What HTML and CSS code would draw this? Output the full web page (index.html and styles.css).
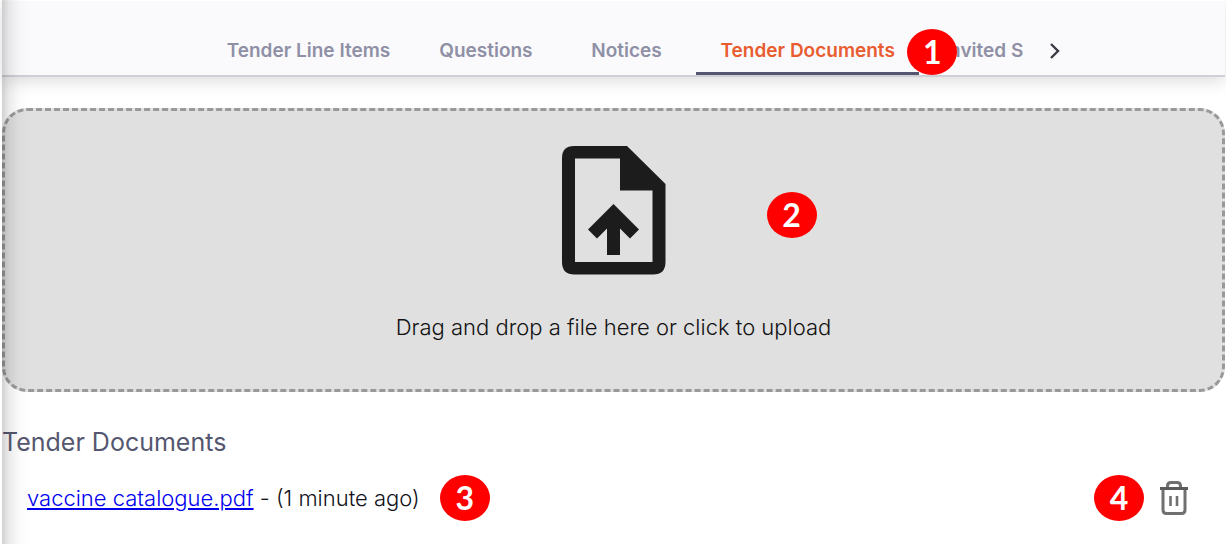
FILE: index.html
```html
<!DOCTYPE html>
<html lang="en">
<head>
<meta charset="utf-8">
<title>Tender Documents</title>
<meta name="viewport" content="width=device-width, initial-scale=1">
<link rel="stylesheet" href="styles.css">
</head>
<body>
<div class="app">
  <header class="tab-bar">
    <div class="tab-scroller">
      <div class="tab-list" role="tablist">
        <button class="tab" type="button" role="tab">Tender Line Items</button>
        <button class="tab" type="button" role="tab">Questions</button>
        <button class="tab" type="button" role="tab">Notices</button>
        <button class="tab tab-active" type="button" role="tab" aria-selected="true">Tender Documents</button>
        <button class="tab" type="button" role="tab">Invited S</button>
      </div>
      <button class="scroll-next" type="button" aria-label="Next tabs">
        <svg width="12" height="18" viewBox="0 0 12 18" fill="none" stroke="#3a3a44" stroke-width="2.4"><path d="M2 2l7 7-7 7"/></svg>
      </button>
      <span class="badge badge-tab">1</span>
    </div>
  </header>
  <main class="content">
    <button class="dropzone" type="button">
      <svg class="upload-icon" viewBox="0 0 104 130" fill="#1c1c1c" aria-hidden="true">
        <path fill-rule="evenodd" d="M12 1H65L103.500 39V117Q103.500 129.500 91 129.500H12.500Q0 129.500 0 117V13Q0 1 12 1ZM13 13.500V117H90.500V45.500H58V13.500Z"/>
        <path d="M51.500 59L77 84.500L68 93.500L58 83.500V110H45V83.500L35 93.500L26 84.500Z"/>
      </svg>
      <span class="drop-label">Drag and drop a file here or click to upload</span>
      <span class="badge badge-drop">2</span>
    </button>
    <h2 class="section-title">Tender Documents</h2>
    <div class="file-row">
      <span class="file-name"><a href="#vaccine-catalogue">vaccine catalogue.pdf</a> - (1 minute ago)</span>
      <span class="badge">3</span>
      <span class="badge badge-delete">4</span>
      <button class="delete" type="button" aria-label="Delete vaccine catalogue.pdf">
        <svg width="28" height="34" viewBox="0 0 28 34" fill="none" stroke="#707070" stroke-width="3">
          <path d="M3 8V29Q3 32.500 6.500 32.500H21.500Q25 32.500 25 29V8"/>
          <path d="M7.500 7V5Q7.500 1.500 11 1.500H17Q20.500 1.500 20.500 5V7"/>
          <path d="M0 7.500H28" stroke="#5c5c5c"/>
          <path d="M10.500 15V25M17 15V25" stroke-width="2.600"/>
        </svg>
      </button>
    </div>
  </main>
</div>
</body>
</html>
```
FILE: styles.css
```css
* {
  box-sizing: border-box;
}

body {
  margin: 0;
  background: #fff;
  color: #12121a;
  font-family: Inter, "Noto Sans", sans-serif;
}

button {
  margin: 0;
  padding: 0;
  border: 0;
  background: none;
  color: inherit;
  font: inherit;
  cursor: pointer;
}

svg {
  display: block;
}

.app {
  position: relative;
  min-height: 100vh;
  margin: 0 1px 0 2px;
}

.app::after {
  content: "";
  position: absolute;
  inset: 0 auto 0 0;
  width: 28px;
  background: linear-gradient(to right, rgba(0, 0, 0, 0.18), rgba(0, 0, 0, 0.08) 25%, rgba(0, 0, 0, 0.02) 60%, transparent);
  pointer-events: none;
}

.tab-bar {
  display: flex;
  justify-content: center;
  padding-top: 26px;
  background: #fafafc;
  border-top: 1px solid #fff;
  border-bottom: 2px solid #cfcfd6;
  box-shadow: 0 4px 16px rgba(0, 0, 0, 0.14);
}

.tab-scroller {
  position: relative;
  display: flex;
  padding-left: 62px;
}

.tab-list {
  display: flex;
}

.tab {
  min-width: 139px;
  height: 48px;
  padding: 2px 24px 0 25px;
  border-bottom: 3px solid transparent;
  color: #8f90a6;
  font-size: 19px;
  font-weight: 600;
  line-height: 24px;
  white-space: nowrap;
}

.tab:last-child {
  min-width: 0;
  padding-right: 0;
}

.tab-active {
  border-bottom-color: #555770;
  color: #e95c30;
}

.scroll-next {
  display: grid;
  place-items: center;
  width: 64px;
  height: 48px;
}

.badge {
  display: grid;
  flex: none;
  place-items: center;
  width: 50px;
  height: 46px;
  border-radius: 50%;
  background: #f00;
  color: #fff;
  font-family: Lato, "Noto Sans", sans-serif;
  font-size: 32px;
  font-weight: 700;
  line-height: 46px;
}

.badge-tab {
  position: absolute;
  top: 2px;
  right: 130px;
}

.content {
  padding-top: 31px;
}

.dropzone {
  position: relative;
  display: flex;
  flex-direction: column;
  align-items: center;
  gap: 36px;
  width: 100%;
  padding: 34px 24px 46px;
  border: 3px dashed #999;
  border-radius: 25px;
  background: #e0e0e0;
  color: #121212;
}

.upload-icon {
  width: 104px;
  height: 130px;
}

.drop-label,
.file-name {
  font-size: 22px;
  font-weight: 300;
  line-height: 32px;
}

.badge-drop {
  position: absolute;
  top: 81px;
  left: calc(50% + 153px);
}

.section-title {
  margin: 33px 0 16px;
  color: #555770;
  font-size: 25px;
  font-weight: 400;
  line-height: 34px;
}

.file-row {
  display: flex;
  align-items: center;
  gap: 16px;
  padding: 0 37px 0 25px;
}

.file-name {
  margin-right: 4px;
}

.file-name a {
  color: #00e;
}

.badge-delete {
  margin-left: auto;
}
```
